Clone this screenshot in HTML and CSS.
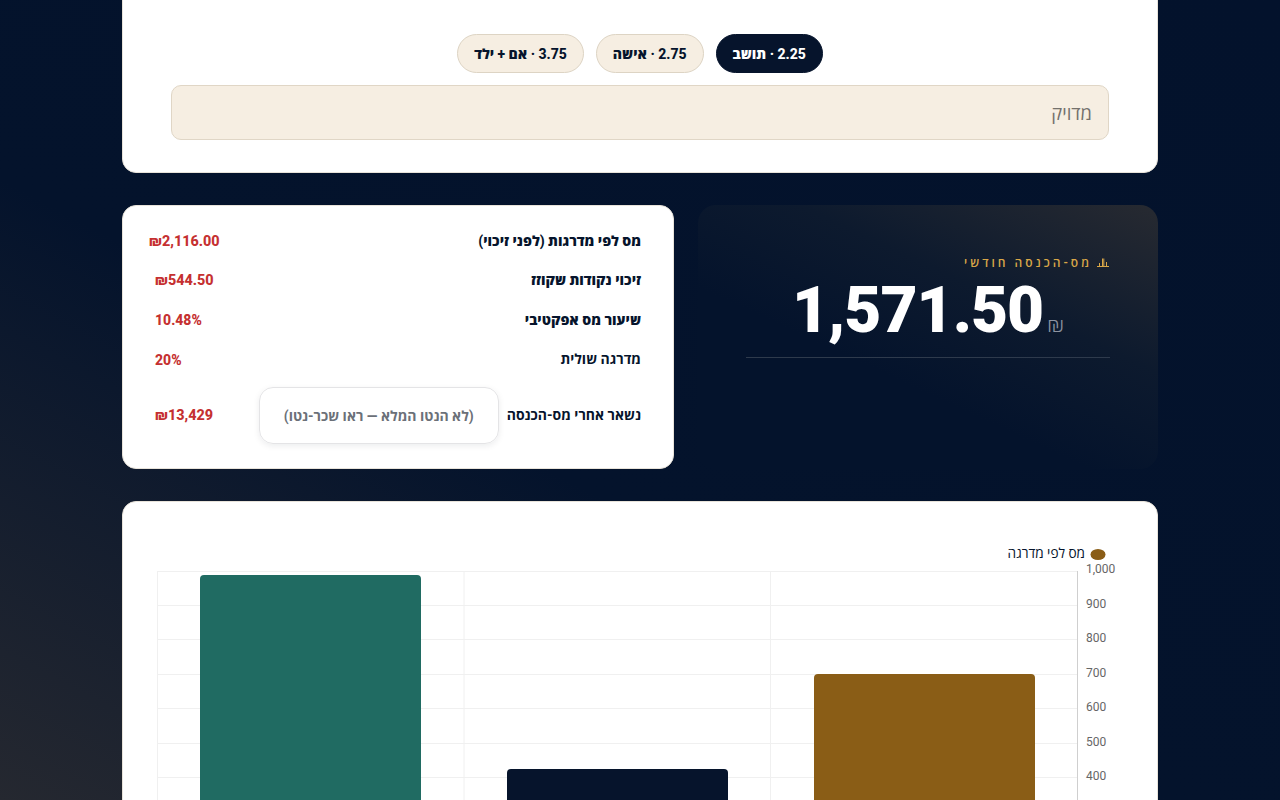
FILE: index.html
```html
<!DOCTYPE html>
<html lang="he" dir="rtl">
<head>
<meta charset="utf-8">
<title>מס הכנסה</title>
<link rel="stylesheet" href="styles.css">
</head>
<body>
<main class="page">
  <section class="card top-card">
    <div class="pills">
      <button class="pill pill-active">2.25 · תושב</button>
      <button class="pill">2.75 · אישה</button>
      <button class="pill">3.75 · אם + ילד</button>
    </div>
    <div class="field">מדויק</div>
  </section>

  <div class="result-grid">
    <section class="hero">
      <div class="hero-label">
        <svg class="hero-icon" viewBox="1 0 12 12" width="12" height="12" aria-hidden="true"><path d="M0 10.500h12M2.500 10V7M5.500 10V2.500M6.800 10V2.500M9.500 10V6" fill="none" stroke="#d9a748" stroke-width="1"/></svg>
        <span>מס-הכנסה חודשי</span>
      </div>
      <div class="hero-value"><span class="hero-cur">₪</span><span class="hero-num">1,571.50</span></div>
      <div class="hero-rule"></div>
    </section>

    <section class="card table-card">
      <div class="row"><span class="row-label row-label-heavy">מס לפי מדרגות (לפני זיכוי)</span><span class="row-val row-val-wide">₪2,116.00</span></div>
      <div class="row"><span class="row-label row-label-heavy">זיכוי נקודות שקוזז</span><span class="row-val">₪544.50</span></div>
      <div class="row"><span class="row-label row-label-heavy">שיעור מס אפקטיבי</span><span class="row-val row-val-pct">10.48%</span></div>
      <div class="row"><span class="row-label">מדרגה שולית</span><span class="row-val row-val-pct">20%</span></div>
      <div class="row row-note">
        <span class="row-label row-label-note">נשאר אחרי מס-הכנסה</span>
        <span class="note">(לא הנטו המלא — ראו שכר-נטו)</span>
        <span class="row-val">₪13,429</span>
      </div>
    </section>
  </div>

  <section class="card chart-card">
    <svg class="chart" width="1036" height="320" viewBox="0 0 1036 320" aria-label="מס לפי מדרגה">
      <ellipse cx="976" cy="53.500" rx="7.500" ry="5.500" fill="#8a5d16"/>
      <text class="legend" x="963" y="57" direction="rtl">מס לפי מדרגה</text>
      <g class="grid">
        <path d="M35 70.500H956M35 104.500H956M35 138.500H956M35 173.500H956M35 207.500H956M35 242.500H956M35 276.500H956M35 311.500H956"/>
        <path d="M35.500 70V320M342 70V320M648.500 70V320"/>
      </g>
      <path class="axis" d="M955.500 70V320"/>
      <g class="ticks">
        <text x="964" y="72">1,000</text>
        <text x="964" y="107">900</text>
        <text x="964" y="141">800</text>
        <text x="964" y="176">700</text>
        <text x="964" y="210">600</text>
        <text x="964" y="245">500</text>
        <text x="964" y="279">400</text>
      </g>
      <rect x="78" y="74" width="221" height="260" rx="4" fill="#206b62"/>
      <rect x="385" y="268" width="221" height="70" rx="4" fill="#06142c"/>
      <rect x="692" y="173" width="221" height="170" rx="4" fill="#8a5d16"/>
    </svg>
  </section>
</main>
</body>
</html>
```
FILE: styles.css
```css
* { box-sizing: border-box; }
html, body { margin: 0; height: 800px; overflow: hidden; }
body {
  background: linear-gradient(28deg, #252830 0%, #04132c 42%, #03122c 100%);
  font-family: Roboto, "Open Sans", sans-serif;
  color: #06142c;
}
.page {
  width: 1036px;
  margin: -40px auto 0;
  display: flex;
  flex-direction: column;
  gap: 32px;
}
.card {
  background: #fff;
  border: 1px solid #e8e3da;
  border-radius: 14px;
}
.top-card {
  height: 213px;
  padding: 73px 48px 32px;
  display: flex;
  flex-direction: column;
  gap: 12px;
}
.pills { display: flex; justify-content: center; gap: 12px; }
.pill {
  height: 39px;
  padding: 0 16px;
  border: 1px solid #ddd4c4;
  border-radius: 20px;
  background: #f6eee2;
  color: #06142c;
  font: 800 14px Roboto, "Open Sans", sans-serif;
}
.pill-active { background: #06142c; border-color: #06142c; color: #fff; }
.field {
  height: 55px;
  padding: 0 16px;
  background: #f6eee2;
  border: 1px solid #e0d6c6;
  border-radius: 10px;
  display: flex;
  align-items: center;
  color: #74716c;
  font-size: 18.400px;
  font-weight: 500;
}
.result-grid { display: grid; grid-template-columns: 460px 552px; gap: 24px; height: 264px; }
.hero {
  border-radius: 18px;
  background: linear-gradient(205deg, #272a31 0%, #0d1a2e 35%, #04132c 62%);
  padding: 47px 48px 0;
}
.hero-label {
  display: flex;
  align-items: center;
  gap: 6px;
  color: #d9a748;
  font-size: 12px;
  font-weight: 600;
  letter-spacing: 3px;
  height: 20px;
}
.hero-icon { overflow: visible; }
.hero-value {
  display: flex;
  justify-content: center;
  align-items: baseline;
  gap: 4px;
  margin-top: 1px;
  height: 75px;
  color: #fff;
}
.hero-num { font-size: 64px; font-weight: 900; letter-spacing: -1px; line-height: 75px; direction: ltr; }
.hero-cur { font-size: 22px; font-weight: 300; color: #8d93a0; }
.hero-rule { height: 1px; background: #2e3a4c; margin-top: 9px; }
.table-card { padding: 15px 32px 16px; display: flex; flex-direction: column; }
.row {
  display: flex;
  align-items: center;
  justify-content: space-between;
  height: 39.300px;
  font-size: 14px;
  font-weight: 700;
}
.row-label { color: #06142c; white-space: nowrap; }
.row-label-heavy { font-weight: 800; }
.row-label-note { flex: 0 0 134px; }
.row-val { width: 58px; margin-top: 2px; font-size: 14.400px; font-weight: 800; color: #c53030; direction: ltr; text-align: left; white-space: nowrap; }
.row-val-wide { width: 70px; margin-left: -6px; margin-right: -6px; }
.row-val-pct { font-size: 14px; }
.row-note { height: 73px; justify-content: flex-start; gap: 8px; }
.row-note .row-val { margin-right: auto; }
.note {
  width: 240px;
  height: 57px;
  margin-top: 2px;
  display: flex;
  align-items: center;
  justify-content: center;
  border: 1px solid #e4e4e6;
  border-radius: 14px;
  box-shadow: 0 2px 6px rgba(6, 20, 44, 0.08);
  color: #6b7078;
  font-weight: 700;
}
.chart-card { height: 320px; overflow: hidden; }
.chart { display: block; margin: -1px; font-family: Roboto, "Open Sans", sans-serif; }
.legend { font-size: 13.600px; font-weight: 500; fill: #06142c; }
.grid path { fill: none; stroke: #f0f0f0; stroke-width: 1; }
.axis { fill: none; stroke: #cfcfcf; stroke-width: 1; }
.ticks text { font-size: 12px; fill: #666; direction: ltr; }
```
